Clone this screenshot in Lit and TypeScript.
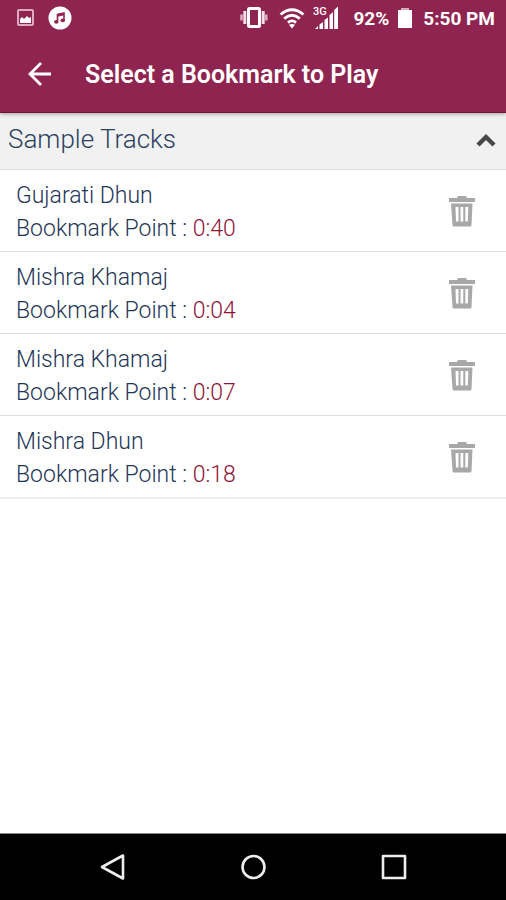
import { LitElement, html, svg, css } from "lit";
import { customElement, property, state } from "lit/decorators.js";

interface Bookmark {
  id: number;
  track: string;
  point: string;
}

@customElement("status-bar")
class StatusBar extends LitElement {
  static styles = css`
    :host {
      display: flex;
      align-items: center;
      justify-content: space-between;
      height: 36px;
      padding: 0 11px 0 15px;
      color: #fff;
      font-size: 19px;
      font-weight: 700;
    }
    .group {
      display: flex;
      align-items: center;
    }
    .left {
      gap: 11px;
    }
    .wifi {
      margin: 0 8px 0 11px;
    }
    .percent {
      margin: 0 9px 0 13px;
    }
    .time {
      margin-left: 11px;
    }
    .network {
      font-size: 11px;
      font-weight: 500;
    }
    svg {
      display: block;
      flex: none;
    }
  `;

  render() {
    return html`
      <div class="group left">
        <svg width="22" height="22" viewBox="0 0 22 22" aria-label="Screenshot saved">
          <rect x="3" y="3" width="15" height="15" rx="1" fill="none" stroke="#dba9c0" stroke-width="2" />
          <path d="M5 16v-4l2-2 2 2 3-3 2 2 2-1v6z" fill="#fff" />
        </svg>
        <svg width="24" height="24" viewBox="0 0 24 24" aria-label="Music">
          <circle cx="12" cy="12" r="11.5" fill="#fff" />
          <path d="M9.500 15.500V8.500l6.500-1.600v7.300M9.500 10l6.500-1.600" fill="none" stroke="#922450" stroke-width="1.600" />
          <ellipse cx="8.300" cy="15.800" rx="2.200" ry="1.900" fill="#922450" />
          <ellipse cx="14.800" cy="14.300" rx="2.200" ry="1.900" fill="#922450" />
        </svg>
      </div>
      <div class="group">
        <svg width="28" height="24" viewBox="0 0 28 24" aria-label="Vibrate">
          <rect x="8.500" y="2.500" width="11" height="18" rx="1" fill="none" stroke="#fff" stroke-width="3" />
          <path d="M4.800 5v13M23.200 5v13" stroke="#f3dde7" stroke-width="3" />
          <path d="M1.500 8.500v6M26.300 8.500v6" stroke="#d9a9be" stroke-width="2.600" />
        </svg>
        <svg class="wifi" width="26" height="22" viewBox="0 0 26 22" aria-label="Wi-Fi">
          <g fill="none" stroke="#fff" stroke-width="2.800">
            <path d="M1.500 7.500Q13-2 24.500 7.500" />
            <path d="M5.200 11.600Q13 5 20.800 11.600" />
            <path d="M9 15.600Q13 12.200 17 15.600" />
          </g>
          <path d="M10 17.800Q13 16 16 17.800L13 21.500z" fill="#fff" />
        </svg>
        <svg width="27" height="26" viewBox="0 0 27 26" aria-label="3G signal">
          <text class="network" x="0" y="10" fill="#fff">3G</text>
          <g fill="#fff">
            <path d="M2 24l3-3v3z" />
            <path d="M6.500 19.500l3.500-2.500v7H6.500z" />
            <path d="M11.500 15l3.500-2.500V24h-3.500z" />
            <path d="M16.500 10L20 7v17h-3.500z" />
            <path d="M21.200 5L25 1.500V24h-3.800z" />
          </g>
        </svg>
        <span class="percent">92%</span>
        <svg width="14" height="20" viewBox="0 0 14 20" aria-label="Battery">
          <path d="M3 0h8v2H3z" fill="#d9a9be" />
          <path d="M0 2h14v18H0z" fill="#fff" />
        </svg>
        <span class="time">5:50 PM</span>
      </div>
    `;
  }
}

@customElement("bookmark-row")
class BookmarkRow extends LitElement {
  @property({ attribute: false }) bookmark!: Bookmark;

  static styles = css`
    :host {
      display: flex;
      align-items: center;
      justify-content: space-between;
      padding: 9px 28px 6px 16px;
      color: #1f3758;
      font-size: 23px;
      font-weight: 350;
      line-height: 33px;
    }
    .point {
      color: #8f143b;
    }
    button {
      display: block;
      padding: 0;
      border: 0;
      background: none;
      cursor: pointer;
    }
    svg {
      display: block;
    }
  `;

  private remove() {
    this.dispatchEvent(new CustomEvent("remove", { detail: this.bookmark.id }));
  }

  render() {
    const { track, point } = this.bookmark;
    return html`
      <div>
        <div>${track}</div>
        <div>Bookmark Point : <span class="point">${point}</span></div>
      </div>
      <button aria-label="Delete bookmark ${track} ${point}" @click=${this.remove}>
        <svg width="32" height="32" viewBox="0 0 32 32">
          <path d="M3 2h8l1-2h8l1 2h8v4H3z" fill="#a8a8a8" />
          <path
            fill-rule="evenodd"
            d="M5 7.500h21.500l-1 21.500a1.500 1.500 0 0 1-1.500 1.500H8a1.500 1.500 0 0 1-1.500-1.500zM9.500 11l.5 14.500h2.500V11zM14.500 11v14.500h2.800V11zM19.300 11v14.500h2.500l.5-14.500z"
            fill="#a8a8a8"
          />
        </svg>
      </button>
    `;
  }
}

@customElement("app-root")
class AppRoot extends LitElement {
  @state() private open = true;
  @state() private bookmarks: Bookmark[] = [
    { id: 1, track: "Gujarati Dhun", point: "0:40" },
    { id: 2, track: "Mishra Khamaj", point: "0:04" },
    { id: 3, track: "Mishra Khamaj", point: "0:07" },
    { id: 4, track: "Mishra Dhun", point: "0:18" },
  ];

  static styles = css`
    :host {
      display: flex;
      flex-direction: column;
      min-height: 100vh;
      background: #fff;
      font-family: Roboto, "Liberation Sans", sans-serif;
    }
    button {
      margin: 0;
      padding: 0;
      border: 0;
      background: none;
      color: inherit;
      font: inherit;
      cursor: pointer;
    }
    svg {
      display: block;
      flex: none;
    }
    .top {
      position: relative;
      background: #902450;
      color: #fff;
      border-bottom: 1px solid #741338;
      box-shadow: 0 1px 4px rgba(0, 0, 0, 0.35);
    }
    .bar {
      display: flex;
      align-items: center;
      gap: 29px;
      height: 76px;
      padding: 0 24px;
    }
    h1 {
      margin: 0;
      padding-top: 2px;
      font-size: 25px;
      font-weight: 600;
      line-height: 32px;
    }
    main {
      flex: 1;
    }
    h2 {
      margin: 0;
      font-size: 26px;
      font-weight: 300;
    }
    .section {
      display: flex;
      align-items: center;
      justify-content: space-between;
      width: 100%;
      height: 57px;
      padding: 0 8px 4px;
      border-bottom: 1px solid #dcdcdc;
      background: #f1f1f1;
      color: #2a4262;
    }
    ul {
      margin: 0;
      padding: 0;
      list-style: none;
    }
    li {
      border-bottom: 1px solid #dedede;
    }
    li:last-child {
      border-bottom: 2px solid #eee;
    }
    nav {
      display: flex;
      align-items: center;
      justify-content: center;
      gap: 112px;
      height: 66px;
      border-top: 1px solid #888;
      background: #000;
    }
  `;

  private toggle() {
    this.open = !this.open;
  }

  private remove(e: CustomEvent<number>) {
    this.bookmarks = this.bookmarks.filter((b) => b.id !== e.detail);
  }

  private navButton(label: string, shape: unknown) {
    return html`
      <button aria-label=${label}>
        <svg width="28" height="28" viewBox="0 0 28 28" fill="none" stroke="#eee" stroke-width="2.600" stroke-linejoin="round">
          ${shape}
        </svg>
      </button>
    `;
  }

  render() {
    return html`
      <header class="top">
        <status-bar></status-bar>
        <div class="bar">
          <button aria-label="Back">
            <svg width="32" height="32" viewBox="0 0 32 32" fill="none" stroke="#fff" stroke-width="2.800">
              <path d="M27 16H6M17 5L6 16l11 11" />
            </svg>
          </button>
          <h1>Select a Bookmark to Play</h1>
        </div>
      </header>
      <main>
        <h2>
          <button class="section" aria-expanded=${this.open} @click=${this.toggle}>
            <span>Sample Tracks</span>
            <svg width="24" height="24" viewBox="0 0 24 24" fill="none" stroke="#484848" stroke-width="4.400">
              <path d=${this.open ? "M4 18l8-8 8 8" : "M4 10l8 8 8-8"} />
            </svg>
          </button>
        </h2>
        ${this.open
          ? html`<ul>
              ${this.bookmarks.map(
                (b) => html`<li><bookmark-row .bookmark=${b} @remove=${this.remove}></bookmark-row></li>`
              )}
            </ul>`
          : null}
      </main>
      <nav aria-label="System">
        ${this.navButton("Back", svg`<path d="M24 2.500v23L3 14z" />`)}
        ${this.navButton("Home", svg`<circle cx="14.500" cy="14" r="11" />`)}
        ${this.navButton("Recent apps", svg`<rect x="4" y="3" width="22" height="22" />`)}
      </nav>
    `;
  }
}
